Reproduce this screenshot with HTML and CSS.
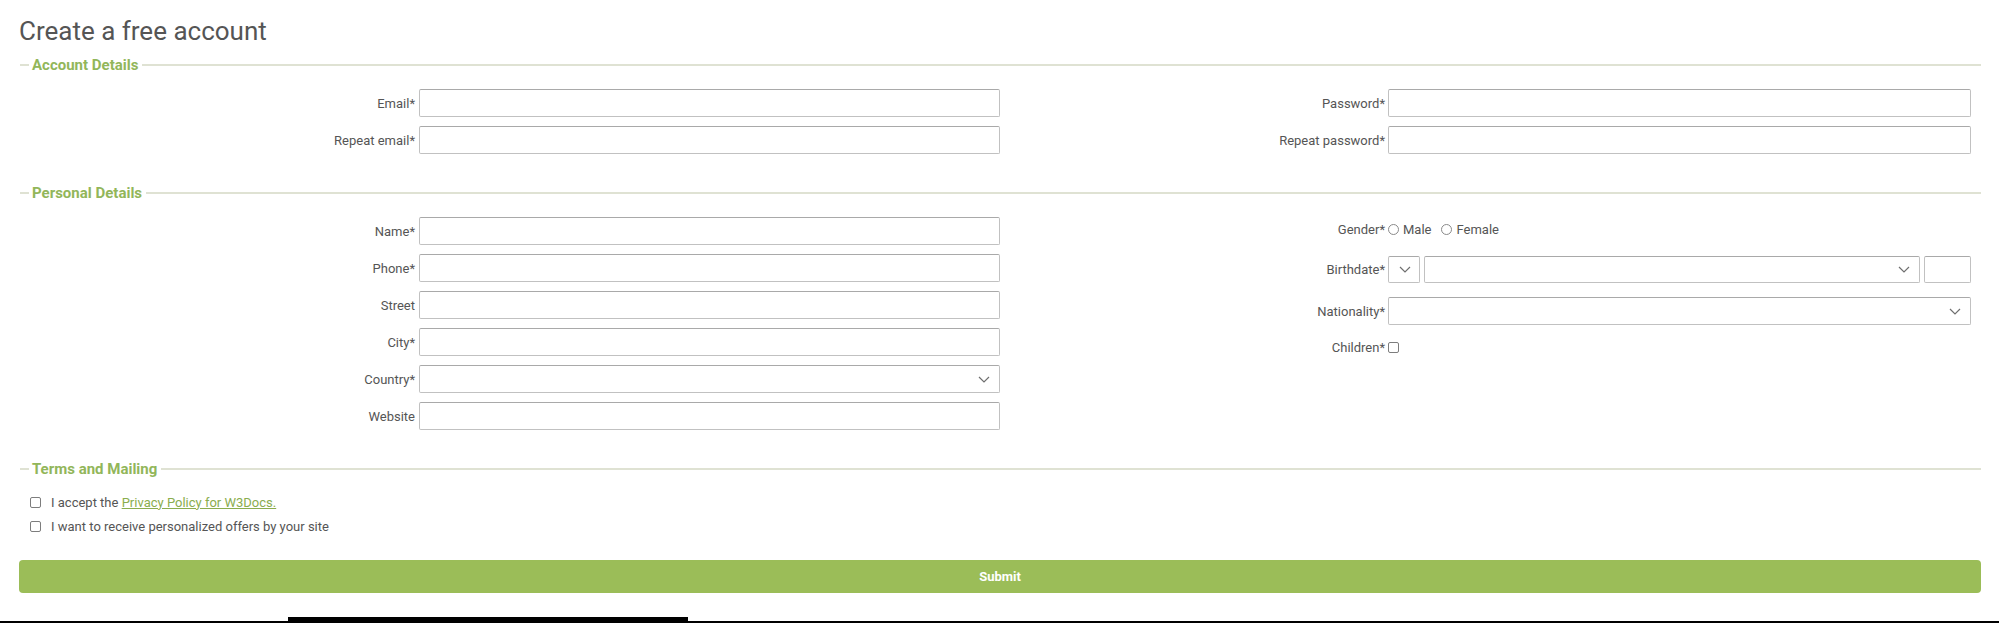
FILE: index.html
```html
<!DOCTYPE html>
<html lang="en">
<head>
<meta charset="utf-8">
<title>Create a free account</title>
<link rel="stylesheet" href="styles.css">
</head>
<body>
<main class="page">
  <h1 class="title">Create a free account</h1>
  <form class="form">
    <section class="group">
      <div class="legend"><span class="legend-lead"></span><h2 class="legend-text">Account Details</h2><span class="legend-rule"></span></div>
      <div class="cols">
        <div class="col col-left">
          <label class="row"><span class="lbl">Email*</span><input class="field" type="email"></label>
          <label class="row"><span class="lbl">Repeat email*</span><input class="field" type="email"></label>
        </div>
        <div class="col col-right col-tight">
          <label class="row"><span class="lbl">Password*</span><input class="field" type="password"></label>
          <label class="row"><span class="lbl">Repeat password*</span><input class="field" type="password"></label>
        </div>
      </div>
    </section>

    <section class="group">
      <div class="legend"><span class="legend-lead"></span><h2 class="legend-text">Personal Details</h2><span class="legend-rule"></span></div>
      <div class="cols">
        <div class="col col-left">
          <label class="row"><span class="lbl">Name*</span><input class="field" type="text"></label>
          <label class="row"><span class="lbl">Phone*</span><input class="field" type="tel"></label>
          <label class="row"><span class="lbl">Street</span><input class="field" type="text"></label>
          <label class="row"><span class="lbl">City*</span><input class="field" type="text"></label>
          <label class="row"><span class="lbl">Country*</span>
            <span class="select"><select class="field"><option></option></select><svg class="chev" viewBox="0 0 12 7" width="12" height="7"><path d="M1 1l5 5 5-5"/></svg></span>
          </label>
          <label class="row"><span class="lbl">Website</span><input class="field" type="url"></label>
        </div>
        <div class="col col-right col-spaced">
          <div class="row row-gender"><span class="lbl">Gender*</span>
            <span class="choices">
              <label class="choice"><input class="radio" type="radio" name="g">Male</label>
              <label class="choice"><input class="radio" type="radio" name="g">Female</label>
            </span>
          </div>
          <div class="row row-birth"><span class="lbl">Birthdate*</span>
            <span class="birth">
              <span class="select select-day"><select class="field"><option></option></select><svg class="chev" viewBox="0 0 12 7" width="12" height="7"><path d="M1 1l5 5 5-5"/></svg></span>
              <span class="select select-month"><select class="field"><option></option></select><svg class="chev" viewBox="0 0 12 7" width="12" height="7"><path d="M1 1l5 5 5-5"/></svg></span>
              <input class="field field-year" type="text">
            </span>
          </div>
          <label class="row"><span class="lbl">Nationality*</span>
            <span class="select"><select class="field"><option></option></select><svg class="chev" viewBox="0 0 12 7" width="12" height="7"><path d="M1 1l5 5 5-5"/></svg></span>
          </label>
          <label class="row row-check"><span class="lbl">Children*</span><span class="choices"><input class="box" type="checkbox"></span></label>
        </div>
      </div>
    </section>

    <section class="group group-last">
      <div class="legend"><span class="legend-lead"></span><h2 class="legend-text">Terms and Mailing</h2><span class="legend-rule"></span></div>
      <div class="terms">
        <label class="term"><input class="box" type="checkbox"><span>I accept the <a class="link" href="#">Privacy Policy for W3Docs.</a></span></label>
        <label class="term"><input class="box" type="checkbox"><span>I want to receive personalized offers by your site</span></label>
      </div>
    </section>

    <button class="submit" type="button">Submit</button>
  </form>
</main>
<footer class="bottom"><span class="bottom-box"></span></footer>
</body>
</html>
```

FILE: styles.css
```css
* { box-sizing: border-box; }

html, body {
  margin: 0;
  background: #ffffff;
}

body {
  font-family: Roboto, "Liberation Sans", Arial, sans-serif;
  color: #555555;
  font-size: 13px;
  height: 623px;
  overflow: hidden;
}

.page {
  padding: 0 18px 0 19px;
}

.title {
  margin: 16px 0 9px 0;
  font-size: 26px;
  line-height: 31px;
  font-weight: 400;
  color: #555555;
}

.form {
  display: flex;
  flex-direction: column;
}

.group {
  margin-bottom: 30px;
}

.group-last {
  margin-bottom: 0;
}

.legend {
  display: flex;
  align-items: center;
  height: 17px;
}

.legend-lead {
  width: 9px;
  height: 2px;
  margin-left: 1px;
  background: #dfe2d3;
}

.legend-rule {
  flex: 1;
  height: 2px;
  background: #dfe2d3;
}

.legend-text {
  margin: 0;
  padding: 1px 4px 0 3px;
  font-size: 15px;
  line-height: 17px;
  font-weight: 700;
  color: #92b65a;
}

.cols {
  display: grid;
  grid-template-columns: 981px 971px;
  margin-top: 16px;
}

.col {
  display: flex;
  flex-direction: column;
  gap: 9px;
}

.col-spaced {
  gap: 14px;
}

.row {
  display: grid;
  align-items: center;
  height: 28px;
}

.col-left .row {
  grid-template-columns: 396px 1fr;
  column-gap: 4px;
}

.col-right .row {
  grid-template-columns: 385px 1fr;
  column-gap: 3px;
}

.lbl {
  text-align: right;
  font-size: 13px;
  line-height: 16px;
  padding-top: 1px;
  color: #555555;
  white-space: nowrap;
}

.field {
  display: block;
  width: 100%;
  height: 28px;
  margin: 0;
  padding: 0 8px;
  border: 1px solid #c1c1c1;
  border-top-color: #a9a9a9;
  border-radius: 2px;
  background: #ffffff;
  font: inherit;
  color: #555555;
  outline: none;
}

select.field {
  appearance: none;
  -webkit-appearance: none;
}

.select {
  position: relative;
  display: block;
  width: 100%;
}

.chev {
  position: absolute;
  right: 10px;
  top: 11px;
  fill: none;
  stroke: #6f6f6f;
  stroke-width: 1.2;
}

.row-gender {
  height: 25px;
}

.row-birth {
  height: 27px;
}

.row-birth .field {
  height: 27px;
}

.row-birth .chev {
  top: 10px;
}

.row-check {
  height: 16px;
}

.birth {
  display: grid;
  grid-template-columns: 32px 1fr 47px;
  column-gap: 4px;
}

.select-day .chev {
  right: 9px;
}

.field-year {
  padding: 0 4px;
}

.choices {
  display: flex;
  align-items: center;
  gap: 10px;
}

.choice {
  display: flex;
  align-items: center;
  gap: 4px;
  font-size: 13px;
  color: #555555;
}

.radio {
  appearance: none;
  -webkit-appearance: none;
  width: 11px;
  height: 11px;
  margin: 0;
  border: 1px solid #8a8a8a;
  border-radius: 50%;
  background: #ffffff;
}

.box {
  appearance: none;
  -webkit-appearance: none;
  width: 11px;
  height: 11px;
  margin: 0;
  border: 1px solid #7d7d7d;
  border-radius: 2px;
  background: #ffffff;
}

.terms {
  display: flex;
  flex-direction: column;
  margin-top: 13px;
}

.term {
  display: flex;
  align-items: center;
  gap: 10px;
  height: 24px;
  padding-left: 11px;
  font-size: 13px;
  color: #555555;
}

.link {
  color: #8aad4e;
  text-decoration: underline;
}

.submit {
  display: block;
  width: 100%;
  height: 33px;
  margin: 22px 0 24px;
  border: none;
  border-radius: 4px;
  background: #9bbd58;
  color: #ffffff;
  font-family: Roboto, "Liberation Sans", Arial, sans-serif;
  font-size: 13px;
  font-weight: 700;
}

.bottom {
  display: flex;
  height: 6px;
  border-bottom: 2px solid #000000;
}

.bottom-box {
  width: 400px;
  height: 4px;
  margin-left: 288px;
  background: #000000;
}
```
